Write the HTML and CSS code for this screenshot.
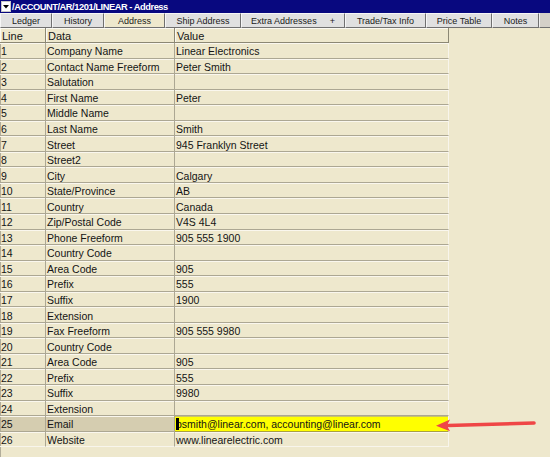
FILE: index.html
```html
<!DOCTYPE html>
<html>
<head>
<meta charset="utf-8">
<link rel="stylesheet" href="styles.css">
</head>
<body>
<div class="window">
  <div class="titlebar">
    <span class="sysbox"><svg width="8" height="9" viewBox="0 0 8 9"><polygon points="1,3 7,3 4,6.5" fill="#000"/></svg></span>
    <span class="title">/ACCOUNT/AR/1201/LINEAR - Address</span>
  </div>
  <div class="tabs">
    <div class="tab">Ledger</div>
    <div class="tab">History</div>
    <div class="tab active">Address</div>
    <div class="tab">Ship Address</div>
    <div class="tab extra"><span>Extra Addresses</span><span>+</span></div>
    <div class="tab">Trade/Tax Info</div>
    <div class="tab">Price Table</div>
    <div class="tab">Notes</div>
    <div class="tab-fill"></div>
  </div>
  <div class="content">
    <div class="grid">
      <div class="hdr"><div class="cell">Line</div><div class="cell">Data</div><div class="cell">Value</div></div>
      <div class="row"><div class="cell n">1</div><div class="cell">Company Name</div><div class="cell v">Linear Electronics</div></div>
      <div class="row"><div class="cell n">2</div><div class="cell">Contact Name Freeform</div><div class="cell v">Peter Smith</div></div>
      <div class="row"><div class="cell n">3</div><div class="cell">Salutation</div><div class="cell v"></div></div>
      <div class="row"><div class="cell n">4</div><div class="cell">First Name</div><div class="cell v">Peter</div></div>
      <div class="row"><div class="cell n">5</div><div class="cell">Middle Name</div><div class="cell v"></div></div>
      <div class="row"><div class="cell n">6</div><div class="cell">Last Name</div><div class="cell v">Smith</div></div>
      <div class="row"><div class="cell n">7</div><div class="cell">Street</div><div class="cell v">945 Franklyn Street</div></div>
      <div class="row"><div class="cell n">8</div><div class="cell">Street2</div><div class="cell v"></div></div>
      <div class="row"><div class="cell n">9</div><div class="cell">City</div><div class="cell v">Calgary</div></div>
      <div class="row"><div class="cell n">10</div><div class="cell">State/Province</div><div class="cell v">AB</div></div>
      <div class="row"><div class="cell n">11</div><div class="cell">Country</div><div class="cell v">Canada</div></div>
      <div class="row"><div class="cell n">12</div><div class="cell">Zip/Postal Code</div><div class="cell v">V4S 4L4</div></div>
      <div class="row"><div class="cell n">13</div><div class="cell">Phone Freeform</div><div class="cell v">905 555 1900</div></div>
      <div class="row"><div class="cell n">14</div><div class="cell">Country Code</div><div class="cell v"></div></div>
      <div class="row"><div class="cell n">15</div><div class="cell">Area Code</div><div class="cell v">905</div></div>
      <div class="row"><div class="cell n">16</div><div class="cell">Prefix</div><div class="cell v">555</div></div>
      <div class="row"><div class="cell n">17</div><div class="cell">Suffix</div><div class="cell v">1900</div></div>
      <div class="row"><div class="cell n">18</div><div class="cell">Extension</div><div class="cell v"></div></div>
      <div class="row"><div class="cell n">19</div><div class="cell">Fax Freeform</div><div class="cell v">905 555 9980</div></div>
      <div class="row"><div class="cell n">20</div><div class="cell">Country Code</div><div class="cell v"></div></div>
      <div class="row"><div class="cell n">21</div><div class="cell">Area Code</div><div class="cell v">905</div></div>
      <div class="row"><div class="cell n">22</div><div class="cell">Prefix</div><div class="cell v">555</div></div>
      <div class="row"><div class="cell n">23</div><div class="cell">Suffix</div><div class="cell v">9980</div></div>
      <div class="row"><div class="cell n">24</div><div class="cell">Extension</div><div class="cell v"></div></div>
      <div class="row sel"><div class="cell n">25</div><div class="cell">Email</div><div class="cell v"><span class="caret"></span>psmith@linear.com, accounting@linear.com</div></div>
      <div class="row last"><div class="cell n">26</div><div class="cell">Website</div><div class="cell v">www.linearelectric.com</div></div>
    </div>
    <svg class="arrow" width="110" height="24" viewBox="0 0 110 24">
      <line x1="104" y1="11" x2="18" y2="13.5" stroke="#ef4646" stroke-width="3.6" stroke-linecap="round"/>
      <polygon points="6,13.7 20,7.5 17,13.6 20,19.2" fill="#ef4646"/>
    </svg>
  </div>
</div>
</body>
</html>
```

FILE: styles.css
```css
body {
  margin: 0;
  background: #eee8cd;
  font-family: "Liberation Sans", Arial, sans-serif;
}

.window {
  position: relative;
  width: 550px;
  height: 457px;
  overflow: hidden;
  background: #eee8cd;
}

.titlebar {
  height: 13px;
  background: #08087f;
  display: flex;
  align-items: center;
}

.sysbox {
  box-sizing: border-box;
  margin-left: 1px;
  width: 10px;
  height: 11px;
  background: #fff;
  border: 1px solid #c8c8c8;
  display: flex;
  align-items: flex-start;
  justify-content: center;
}

.title {
  margin-left: 1px;
  color: #fff;
  font-weight: bold;
  font-size: 9.3px;
  letter-spacing: -0.45px;
}

.tabs {
  display: grid;
  grid-template-columns: 52px 52px 61px 76px 104px 81px 66px 47px 1fr;
  height: 15px;
  background: #d4d0c8;
}

.tab {
  box-sizing: border-box;
  border-top: 1px solid #f6f6f6;
  border-left: 1px solid #f6f6f6;
  border-right: 1px solid #707070;
  border-bottom: 1px solid #707070;
  background: #e0e0e0;
  font-size: 9px;
  color: #1a1a1a;
  display: flex;
  align-items: center;
  justify-content: center;
  white-space: nowrap;
}

.tab.active {
  background: #eee8cd;
}

.tab.extra {
  gap: 13px;
}

.tab-fill {
  box-sizing: border-box;
  background: #d4d0c8;
  border-left: 1px solid #f0f0f0;
  border-bottom: 1px solid #707070;
}

.content {
  position: relative;
  height: 429px;
  box-shadow: inset 1px 0 0 #b2ad9a;
}

.grid {
  width: 449px;
}

.hdr,
.row {
  display: grid;
  grid-template-columns: 46px 129px 274px;
}

.hdr {
  height: 15px;
}

.row {
  height: 15.55px;
}

.cell {
  box-sizing: border-box;
  font-size: 10.5px;
  color: #141414;
  white-space: nowrap;
  overflow: hidden;
  display: flex;
  align-items: center;
  padding-left: 1px;
  padding-top: 2px;
}

.hdr .cell {
  border-right: 1px solid #8c8874;
  border-bottom: 1px solid #8c8874;
  box-shadow: inset 1px 1px 0 #fbf9f2;
  padding-left: 2px;
  font-size: 11px;
}

.row .cell {
  border-right: 1px solid #aca793;
  border-bottom: 1px solid #aca793;
  box-shadow: inset 0 1px 0 #faf7ee;
}

.row .cell.n {
  box-shadow: inset 0 1px 0 #faf7ee, inset 1px 0 0 #b2ad9a;
}

.row .cell.v {
  border-right-color: #f8f5ec;
}

.row.last .cell {
  border-bottom-color: #f8f5ec;
}

.row.sel .cell {
  background: #d5cdb0;
}

.row.sel .cell.v {
  position: relative;
  background: #ffff00;
  border-bottom-color: #a9a040;
  box-shadow: inset 0 1px 0 #c9c36a;
}

.caret {
  position: absolute;
  left: 1px;
  top: 2px;
  width: 3px;
  height: 12px;
  background: #000;
}

.arrow {
  position: absolute;
  left: 430px;
  top: 384px;
}
```
